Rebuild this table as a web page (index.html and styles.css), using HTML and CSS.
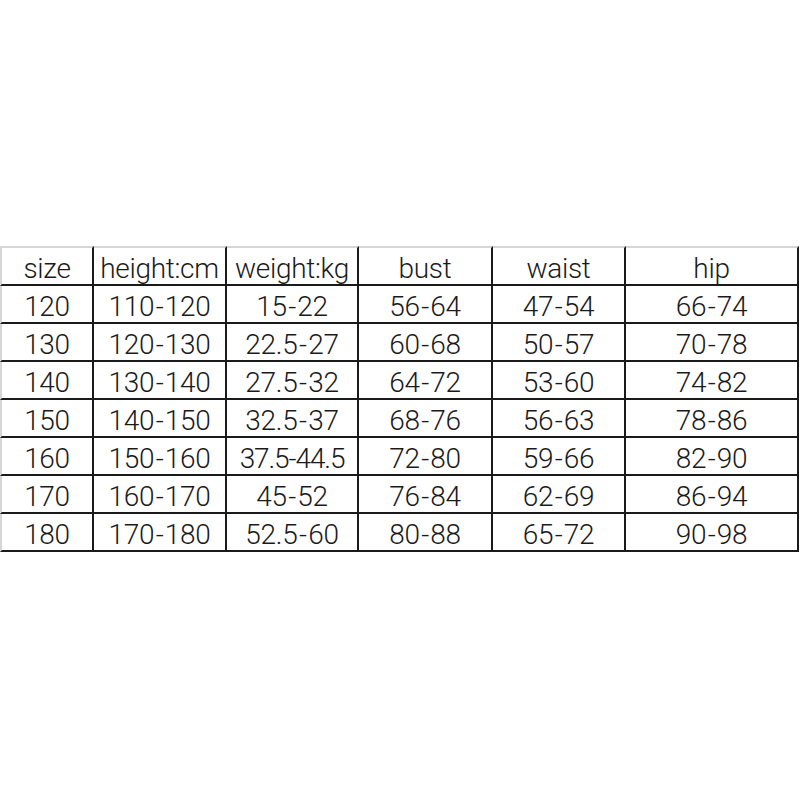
FILE: index.html
```html
<!DOCTYPE html>
<html>
<head>
<meta charset="utf-8">
<link rel="stylesheet" href="styles.css">
</head>
<body>
<table class="sizes">
  <colgroup>
    <col class="c1"><col class="c2"><col class="c3"><col class="c4"><col class="c5"><col class="c6">
  </colgroup>
  <tr class="head"><td>size</td><td>height:cm</td><td>weight:kg</td><td>bust</td><td>waist</td><td>hip</td></tr>
  <tr><td>120</td><td>110<span class="d">-</span>120</td><td>15<span class="d">-</span>22</td><td>56<span class="d">-</span>64</td><td>47<span class="d">-</span>54</td><td>66<span class="d">-</span>74</td></tr>
  <tr><td>130</td><td>120<span class="d">-</span>130</td><td>22.5<span class="d">-</span>27</td><td>60<span class="d">-</span>68</td><td>50<span class="d">-</span>57</td><td>70<span class="d">-</span>78</td></tr>
  <tr><td>140</td><td>130<span class="d">-</span>140</td><td>27.5<span class="d">-</span>32</td><td>64<span class="d">-</span>72</td><td>53<span class="d">-</span>60</td><td>74<span class="d">-</span>82</td></tr>
  <tr><td>150</td><td>140<span class="d">-</span>150</td><td>32.5<span class="d">-</span>37</td><td>68<span class="d">-</span>76</td><td>56<span class="d">-</span>63</td><td>78<span class="d">-</span>86</td></tr>
  <tr><td>160</td><td>150<span class="d">-</span>160</td><td class="tight">37.5-44.5</td><td>72<span class="d">-</span>80</td><td>59<span class="d">-</span>66</td><td>82<span class="d">-</span>90</td></tr>
  <tr><td>170</td><td>160<span class="d">-</span>170</td><td>45<span class="d">-</span>52</td><td>76<span class="d">-</span>84</td><td>62<span class="d">-</span>69</td><td>86<span class="d">-</span>94</td></tr>
  <tr><td>180</td><td>170<span class="d">-</span>180</td><td>52.5<span class="d">-</span>60</td><td>80<span class="d">-</span>88</td><td>65<span class="d">-</span>72</td><td>90<span class="d">-</span>98</td></tr>
</table>
</body>
</html>
```
FILE: styles.css
```css
html, body {
  margin: 0;
  padding: 0;
  background: #ffffff;
}
.sizes {
  margin-top: 246px;
  border-collapse: separate;
  border-spacing: 0;
  table-layout: fixed;
  width: 799px;
  font-family: Roboto, "Noto Sans", "Liberation Sans", sans-serif;
  font-weight: 300;
  font-size: 28px;
  color: #1a1a1a;
}
.c1 { width: 94px; }
.c2 { width: 133px; }
.c3 { width: 132px; }
.c4 { width: 134px; }
.c5 { width: 133px; }
.c6 { width: 173px; }
.sizes td {
  box-sizing: border-box;
  height: 38px;
  padding: 5px 0 0 0;
  text-align: center;
  vertical-align: middle;
  white-space: nowrap;
  overflow: visible;
  line-height: 31px;
  letter-spacing: -0.3px;
  border-right: 2px solid #1a1a1a;
  border-bottom: 2px solid #1a1a1a;
}
.sizes .d {
  margin: 0 1.5px;
}
.sizes td.tight {
  letter-spacing: -1.1px;
}
.sizes td:first-child {
  border-left: 2px solid #d6d6d6;
}
.sizes .head td {
  height: 40px;
  border-top: 2px solid #d6d6d6;
}
```
